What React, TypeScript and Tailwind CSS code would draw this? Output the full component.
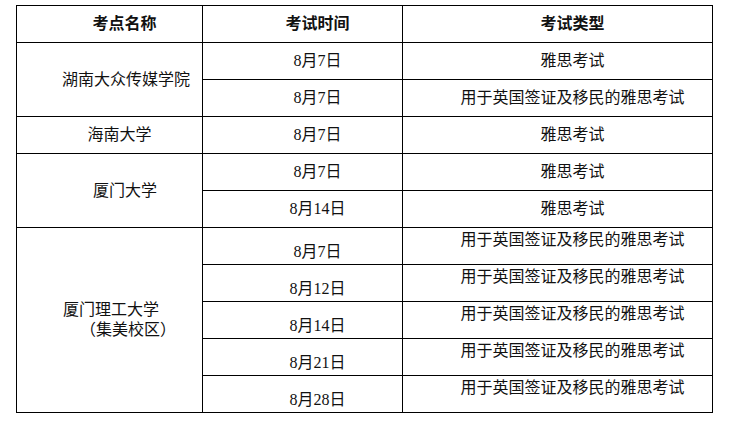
import React from "react";

const font = {
  fontFamily: '"Liberation Serif", "Noto Sans CJK SC", serif',
};

const td = "border border-black h-[37px] p-0 align-middle text-center leading-[20px]";
const C = "用于英国签证及移民的雅思考试";

export default function App() {
  return (
    <div className="w-[751px] h-[425px] bg-white text-[16px] text-[#111]" style={font}>
      <div className="pt-[5px] pl-[16px]">
        <table className="border-collapse table-fixed w-[696px]">
          <colgroup>
            <col className="w-[186px]" />
            <col className="w-[200px]" />
            <col className="w-[310px]" />
          </colgroup>
          <tbody>
            <tr>
              <td className={`${td} font-bold pl-[30px]`}>考点名称</td>
              <td className={`${td} font-bold pl-[30px]`}>考试时间</td>
              <td className={`${td} font-bold pl-[30px]`}>考试类型</td>
            </tr>
            <tr>
              <td rowSpan={2} className={`${td} pl-[33px]`}>湖南大众传媒学院</td>
              <td className={`${td} pl-[30px]`}>8月7日</td>
              <td className={`${td} pl-[30px]`}>雅思考试</td>
            </tr>
            <tr>
              <td className={`${td} pl-[30px]`}>8月7日</td>
              <td className={`${td} pl-[30px]`}>{C}</td>
            </tr>
            <tr>
              <td className={`${td} pl-[20px]`}>海南大学</td>
              <td className={`${td} pl-[30px]`}>8月7日</td>
              <td className={`${td} pl-[30px]`}>雅思考试</td>
            </tr>
            <tr>
              <td rowSpan={2} className={`${td} pl-[31px]`}>厦门大学</td>
              <td className={`${td} pl-[30px]`}>8月7日</td>
              <td className={`${td} pl-[30px]`}>雅思考试</td>
            </tr>
            <tr>
              <td className={`${td} pl-[30px]`}>8月14日</td>
              <td className={`${td} pl-[30px]`}>雅思考试</td>
            </tr>
            <tr>
              <td rowSpan={5} className="border border-black p-0 align-middle text-left">
                <div className="leading-[20px] pl-[46px]">厦门理工大学</div>
                <div className="leading-[20px] pl-[63px]">（集美校区）</div>
              </td>
              <td className={`${td} pl-[30px] pt-[12px]`}>8月7日</td>
              <td className={`${td} pl-[30px] pb-[12px]`}>{C}</td>
            </tr>
            {["8月12日", "8月14日", "8月21日", "8月28日"].map((d) => (
              <tr key={d}>
                <td className={`${td} pl-[30px] pt-[12px]`}>{d}</td>
                <td className={`${td} pl-[30px] pb-[12px]`}>{C}</td>
              </tr>
            ))}
          </tbody>
        </table>
      </div>
    </div>
  );
}
